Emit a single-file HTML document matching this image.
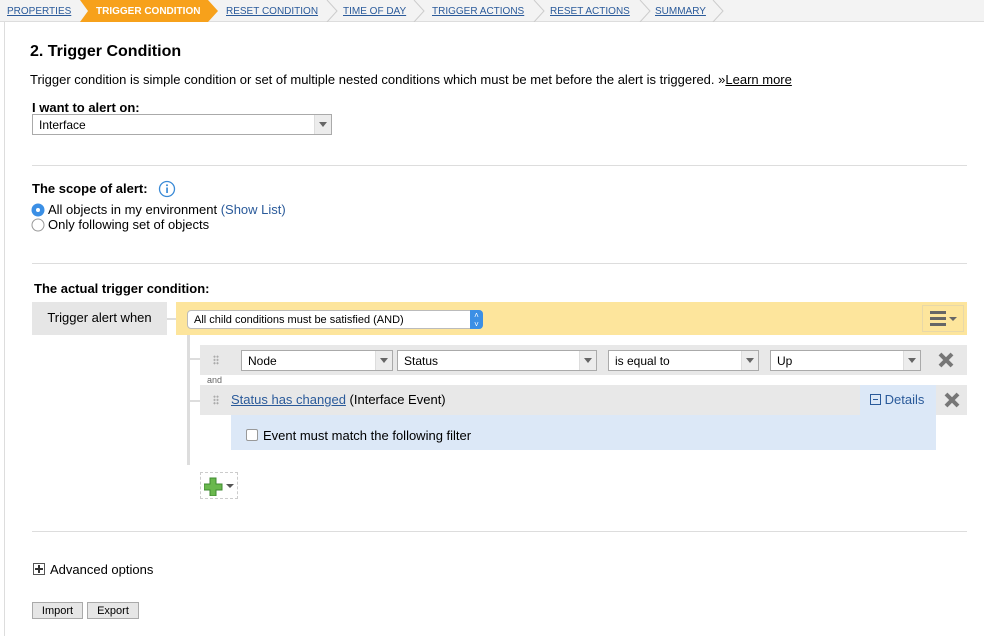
<!DOCTYPE html>
<html><head><style>
*{box-sizing:border-box;margin:0;padding:0}
body{width:984px;height:636px;background:#fff;font-family:"Liberation Sans",Arial,sans-serif;font-size:13px;color:#000;position:relative;overflow:hidden}
.a{position:absolute}
.nav{left:0;top:0;width:984px;height:22px;background:#f3f3f3;border-bottom:1px solid #ddd}
.nav span{position:absolute;top:6px;font-size:10px;color:#2a5a9a;text-decoration:underline}
.sel{position:absolute;height:21px;border:1px solid #aaa;background:#fff;font-size:12px;padding:3px 6px}
.sel:after{content:"";position:absolute;right:0;top:0;width:16px;height:19px;background:#ececec;border-left:1px solid #ddd}
.sel i{position:absolute;right:4px;top:7px;width:0;height:0;border-left:4px solid transparent;border-right:4px solid transparent;border-top:5px solid #666;z-index:2}
.hr{position:absolute;left:32px;width:935px;height:1px;background:#ddd}
.btn{position:absolute;top:602px;height:17px;border:1px solid #aaa;background:#e6e6e6;font-size:11px;text-align:center;line-height:16px}
.dots{position:absolute;width:6px;height:10px;background:radial-gradient(circle,#aaa 0.9px,transparent 1.2px) 0 0/3px 3.3px}
</style></head><body>
<div class="a nav">
<span style="left:7px">PROPERTIES</span>
<svg class="a" style="left:80px;top:0" width="140" height="22"><polygon points="0,0 128,0 138,11 128,22 0,22 8,11" fill="#f7a11b"/></svg>
<span style="left:96px;color:#fff;font-weight:bold;text-decoration:none">TRIGGER CONDITION</span>
<span style="left:226px">RESET CONDITION</span>
<span style="left:343px">TIME OF DAY</span>
<span style="left:432px">TRIGGER ACTIONS</span>
<span style="left:550px">RESET ACTIONS</span>
<span style="left:655px">SUMMARY</span>
<svg class="a" style="left:0;top:0" width="984" height="22" fill="none" stroke="#ccc"><path d="M327,0 L337,11 L327,22 M414,0 L424,11 L414,22 M534,0 L544,11 L534,22 M640,0 L650,11 L640,22 M713,0 L723,11 L713,22"/></svg>
</div>
<div class="a" style="left:4px;top:22px;width:1px;height:614px;background:#ddd"></div>
<div class="a" style="left:30px;top:43px;font-size:16px;font-weight:bold">2. Trigger Condition</div>
<div class="a" style="left:30px;top:72px">Trigger condition is simple condition or set of multiple nested conditions which must be met before the alert is triggered. »<u>Learn more</u></div>
<div class="a" style="left:32px;top:100px;font-weight:bold">I want to alert on:</div>
<div class="sel" style="left:32px;top:114px;width:300px">Interface<i></i></div>
<div class="hr" style="top:165px"></div>
<div class="a" style="left:32px;top:181px;font-weight:bold">The scope of alert:</div>
<svg class="a" style="left:158px;top:180px" width="18" height="18"><circle cx="9" cy="9" r="7.5" fill="none" stroke="#3a8ad6" stroke-width="1.3"/><rect x="8.2" y="7.5" width="1.7" height="5.5" fill="#3a8ad6"/><circle cx="9" cy="5.2" r="1" fill="#3a8ad6"/></svg>
<svg class="a" style="left:31px;top:203px" width="14" height="14"><circle cx="7" cy="7" r="6.5" fill="#3b8fe5"/><circle cx="7" cy="7" r="2" fill="#fff"/></svg>
<div class="a" style="left:48px;top:202px">All objects in my environment <span style="color:#2a5a9a">(Show List)</span></div>
<svg class="a" style="left:31px;top:218px" width="14" height="14"><circle cx="7" cy="7" r="6" fill="#fff" stroke="#999"/></svg>
<div class="a" style="left:48px;top:217px">Only following set of objects</div>
<div class="hr" style="top:263px"></div>
<div class="a" style="left:34px;top:281px;font-weight:bold">The actual trigger condition:</div>
<div class="a" style="left:32px;top:302px;width:135px;height:33px;background:#e6e6e6;text-align:center;line-height:32px">Trigger alert when</div>
<div class="a" style="left:167px;top:318px;width:10px;height:2px;background:#ddd"></div>
<div class="a" style="left:176px;top:302px;width:791px;height:33px;background:#fde59c"></div>
<div class="a" style="left:187px;top:310px;width:296px;height:19px;background:#fff;border:1px solid #bbb;border-radius:4px;font-size:11px;padding:3px 6px">All child conditions must be satisfied (AND)</div>
<div class="a" style="left:470px;top:310px;width:13px;height:19px;background:#3b8fe5;border-radius:0 4px 4px 0;color:#fff;font-size:8px;text-align:center;line-height:9px;padding-top:1px">˄<br>˅</div>
<div class="a" style="left:922px;top:305px;width:42px;height:27px;border:1px solid #e8d8a8"></div>
<svg class="a" style="left:928px;top:310px" width="34" height="18"><rect x="2" y="1" width="16" height="3" fill="#666"/><rect x="2" y="7" width="16" height="3" fill="#666"/><rect x="2" y="13" width="16" height="3" fill="#666"/><polygon points="21,7 29,7 25,11" fill="#666"/></svg>
<div class="a" style="left:187px;top:335px;width:3px;height:130px;background:#ddd"></div>
<div class="a" style="left:190px;top:358px;width:10px;height:2px;background:#ddd"></div>
<div class="a" style="left:190px;top:400px;width:10px;height:2px;background:#ddd"></div>
<div class="a" style="left:200px;top:345px;width:767px;height:30px;background:#e8e8e8"></div>
<div class="dots" style="left:213px;top:355px"></div>
<div class="sel" style="left:241px;top:350px;width:152px">Node<i></i></div>
<div class="sel" style="left:397px;top:350px;width:200px">Status<i></i></div>
<div class="sel" style="left:608px;top:350px;width:151px">is equal to<i></i></div>
<div class="sel" style="left:770px;top:350px;width:151px">Up<i></i></div>
<svg class="a" style="left:938px;top:352px" width="16" height="16"><path d="M2,2 L14,14 M14,2 L2,14" stroke="#777" stroke-width="4"/></svg>
<div class="a" style="left:207px;top:375px;font-size:9px;color:#666">and</div>
<div class="a" style="left:200px;top:385px;width:660px;height:30px;background:#e8e8e8"></div>
<div class="dots" style="left:213px;top:395px"></div>
<div class="a" style="left:231px;top:392px"><u style="color:#2a5a9a">Status has changed</u> (Interface Event)</div>
<div class="a" style="left:860px;top:385px;width:76px;height:65px;background:#dce8f7"></div>
<div class="a" style="left:870px;top:392px;color:#2a5a9a"><span style="display:inline-block;width:11px;height:11px;border:1px solid #2a5a9a;vertical-align:-1px;position:relative"><span style="position:absolute;left:2px;top:4px;width:5px;height:1px;background:#2a5a9a"></span></span> Details</div>
<div class="a" style="left:936px;top:385px;width:31px;height:30px;background:#e8e8e8"></div>
<svg class="a" style="left:944px;top:392px" width="16" height="16"><path d="M2,2 L14,14 M14,2 L2,14" stroke="#777" stroke-width="4"/></svg>
<div class="a" style="left:231px;top:415px;width:705px;height:35px;background:#dce8f7"></div>
<div class="a" style="left:246px;top:429px;width:12px;height:12px;border:1px solid #999;background:#fff;border-radius:2px"></div>
<div class="a" style="left:263px;top:428px">Event must match the following filter</div>
<div class="a" style="left:200px;top:472px;width:38px;height:27px;border:1px dashed #ccc"></div>
<svg class="a" style="left:204px;top:476px" width="32" height="20"><path d="M6,2h6v6h6v6h-6v6h-6v-6h-6v-6h6z" fill="#6ab84e" stroke="#3f8a30"/><polygon points="22,8 30,8 26,12" fill="#555"/></svg>
<div class="hr" style="top:531px"></div>
<div class="a" style="left:33px;top:563px;width:12px;height:12px;border:1px solid #555"></div>
<div class="a" style="left:35px;top:568px;width:8px;height:1.5px;background:#333"></div>
<div class="a" style="left:38px;top:565px;width:1.5px;height:8px;background:#333"></div>
<div class="a" style="left:50px;top:562px">Advanced options</div>
<div class="btn" style="left:32px;width:51px">Import</div>
<div class="btn" style="left:87px;width:52px">Export</div>
</body></html>
